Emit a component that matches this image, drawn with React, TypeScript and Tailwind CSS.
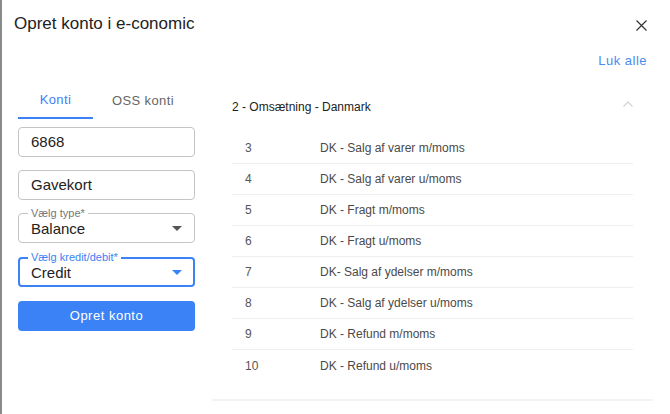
import { useState } from 'react';

const rows = [
  { no: '3', name: 'DK - Salg af varer m/moms' },
  { no: '4', name: 'DK - Salg af varer u/moms' },
  { no: '5', name: 'DK - Fragt m/moms' },
  { no: '6', name: 'DK - Fragt u/moms' },
  { no: '7', name: 'DK- Salg af ydelser m/moms' },
  { no: '8', name: 'DK - Salg af ydelser u/moms' },
  { no: '9', name: 'DK - Refund m/moms' },
  { no: '10', name: 'DK - Refund u/moms' },
];

// Small filled caret used by the selects
const Caret = ({ className }: { className?: string }) => (
  <svg width="10" height="5" viewBox="0 0 10 5" className={className}>
    <path d="M0 0h10L5 5z" fill="currentColor" />
  </svg>
);

function SelectField({ label, value, focused }: { label: string; value: string; focused?: boolean }) {
  return (
    <div
      className={`relative h-[30px] rounded-[4px] flex items-center justify-between ${
        focused ? 'border-2 border-[#3b82f6] pl-[11px] pr-[11px]' : 'border border-[#c4c4c4] pl-[12px] pr-[12px]'
      }`}
    >
      <span
        className={`absolute ${focused ? 'left-[8px] -top-[8px]' : 'left-[9px] -top-[7px]'} bg-white px-[3px] text-[11px] leading-[12px] ${
          focused ? 'text-[#3b82f6]' : 'text-[#777]'
        }`}
      >
        {label}
      </span>
      <span className="text-[15px] text-[#222] leading-[18px] pt-[1px]">{value}</span>
      <Caret className={focused ? 'text-[#3b82f6]' : 'text-[#555]'} />
    </div>
  );
}

export default function App() {
  const [tab, setTab] = useState<'konti' | 'oss'>('konti');

  return (
    <div className="w-[670px] h-[414px] bg-white border-l-2 border-[#8a8a8a] overflow-hidden font-['Liberation_Sans',Arial,sans-serif]">
      {/* Header */}
      <div className="flex items-center justify-between pl-[12px] pr-[23px] pt-[14px]">
        <h1 className="text-[17px] leading-[20px] text-[#222]">Opret konto i e-conomic</h1>
        <svg width="11" height="11" viewBox="0 0 11 11" className="text-[#333] mt-[2px]">
          <path d="M0.5 0.5l10 10M10.5 0.5l-10 10" stroke="currentColor" strokeWidth="1.2" />
        </svg>
      </div>

      <div className="flex justify-end pr-[23px] mt-[19px]">
        <button className="text-[13px] leading-[16px] tracking-[0.5px] text-[#4a8af4]">Luk alle</button>
      </div>

      <div className="flex mt-[12px]">
        {/* Left: form */}
        <div className="ml-[16px] w-[177px] flex flex-col">
          <div className="flex h-[38px]">
            <button
              onClick={() => setTab('konti')}
              className={`w-[75px] text-[13px] tracking-[0.4px] pt-[2px] ${
                tab === 'konti' ? 'text-[#3b82f6] border-b-2 border-[#3b82f6]' : 'text-[#666]'
              }`}
            >
              Konti
            </button>
            <button
              onClick={() => setTab('oss')}
              className={`w-[100px] text-[13px] tracking-[0.4px] pt-[2px] ${
                tab === 'oss' ? 'text-[#3b82f6] border-b-2 border-[#3b82f6]' : 'text-[#666]'
              }`}
            >
              OSS konti
            </button>
          </div>

          <div className="mt-[8px] h-[30px] border border-[#c4c4c4] rounded-[4px] flex items-center px-[12px] text-[15px] text-[#222]">
            6868
          </div>
          <div className="mt-[13px] h-[30px] border border-[#c4c4c4] rounded-[4px] flex items-center px-[12px] text-[15px] text-[#222]">
            Gavekort
          </div>
          <div className="mt-[13px]">
            <SelectField label="Vælg type*" value="Balance" />
          </div>
          <div className="mt-[14px]">
            <SelectField label="Vælg kredit/debit*" value="Credit" focused />
          </div>
          <button className="mt-[14px] h-[30px] rounded-[4px] bg-[#3b82f6] text-white text-[13px] tracking-[0.5px]">
            Opret konto
          </button>
        </div>

        {/* Right: accounts accordion */}
        <div className="ml-[17px] w-[441px] border-b-2 border-[#f3f3f3] pb-[18px]">
          <div className="h-[52px] flex items-center justify-between pl-[20px] pr-[20px]">
            <span className="text-[12px] text-[#222]">2 - Omsætning - Danmark</span>
            <svg width="10" height="6" viewBox="0 0 10 6" className="text-[#d0d0d0] -mt-[6px]">
              <path d="M0.5 5.5L5 1l4.5 4.5" fill="none" stroke="currentColor" strokeWidth="1.1" />
            </svg>
          </div>
          <div className="mx-[20px]">
            {rows.map((r, i) => (
              <div
                key={r.no}
                className={`h-[31px] flex items-center text-[12px] text-[#4a4a4a] ${
                  i < rows.length - 1 ? 'border-b border-[#eeeeee]' : ''
                }`}
              >
                <span className="w-[88px] pl-[13px] text-[#555]">{r.no}</span>
                <span>{r.name}</span>
              </div>
            ))}
          </div>
        </div>
      </div>
    </div>
  );
}
